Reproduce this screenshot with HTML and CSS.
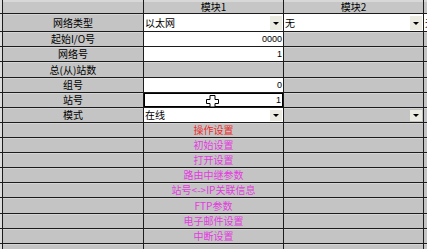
FILE: index.html
```html
<!DOCTYPE html>
<html>
<head>
<meta charset="utf-8">
<link rel="stylesheet" href="styles.css">
</head>
<body>
<div class="sheet">
  <div class="edge"></div><div class="cell hdr"></div><div class="cell hdr">模块1</div><div class="cell hdr">模块2</div><div class="cell hdr"></div>

  <div class="edge"></div><div class="cell label">网络类型</div>
  <div class="cell white combo"><span>以太网</span><i class="btn"><b></b></i></div>
  <div class="cell white combo"><span>无</span><i class="btn"><b></b></i></div>
  <div class="cell white clip">无</div>

  <div class="edge"></div><div class="cell label">起始I/O号</div><div class="cell white num">0000</div><div class="cell"></div><div class="cell"></div>
  <div class="edge"></div><div class="cell label">网络号</div><div class="cell white num">1</div><div class="cell"></div><div class="cell"></div>
  <div class="edge"></div><div class="cell label">总(从)站数</div><div class="cell"></div><div class="cell"></div><div class="cell"></div>
  <div class="edge"></div><div class="cell label">组号</div><div class="cell white num">0</div><div class="cell"></div><div class="cell"></div>
  <div class="edge"></div><div class="cell label">站号</div><div class="cell white num sel">1</div><div class="cell"></div><div class="cell"></div>

  <div class="edge"></div><div class="cell label">模式</div>
  <div class="cell white combo"><span>在线</span><i class="btn"><b></b></i></div>
  <div class="cell combo"><span></span><i class="btn"><b></b></i></div>
  <div class="cell"></div>

  <div class="edge"></div><div class="cell"></div><div class="cell act red">操作设置</div><div class="cell"></div><div class="cell"></div>
  <div class="edge"></div><div class="cell"></div><div class="cell act">初始设置</div><div class="cell"></div><div class="cell"></div>
  <div class="edge"></div><div class="cell"></div><div class="cell act">打开设置</div><div class="cell"></div><div class="cell"></div>
  <div class="edge"></div><div class="cell"></div><div class="cell act">路由中继参数</div><div class="cell"></div><div class="cell"></div>
  <div class="edge"></div><div class="cell"></div><div class="cell act">站号&lt;-&gt;IP关联信息</div><div class="cell"></div><div class="cell"></div>
  <div class="edge"></div><div class="cell"></div><div class="cell act">FTP参数</div><div class="cell"></div><div class="cell"></div>
  <div class="edge"></div><div class="cell"></div><div class="cell act">电子邮件设置</div><div class="cell"></div><div class="cell"></div>
  <div class="edge"></div><div class="cell"></div><div class="cell act">中断设置</div><div class="cell"></div><div class="cell"></div>
  <div class="edge"></div><div class="cell"></div><div class="cell"></div><div class="cell"></div><div class="cell"></div>
</div>
<svg class="cursor" width="15" height="14" viewBox="0 0 15 14">
  <path d="M5 1.5 h5 v4 h3.5 v4 h-3.5 v3.5 h-5 v-3.5 h-3.5 v-4 h3.5 z" fill="#fff" stroke="#000" stroke-width="1" stroke-linejoin="round"/>
</svg>
</body>
</html>
```

FILE: styles.css
```css
html, body {
  margin: 0;
  padding: 0;
  background: #c4c4c4;
  overflow: hidden;
}
body {
  position: relative;
  width: 427px;
  height: 249px;
  font-family: "Noto Sans CJK SC", "Noto Sans", sans-serif;
  font-size: 10px;
  color: #000;
}
.sheet {
  display: grid;
  grid-template-columns: 2px 140px 139px 139px 1fr;
  grid-template-rows: 13px 17px 14px 14px 15px 14px 14px 14px 14px 14px 14px 14px 14px 15px 14px 14px 20px;
  gap: 1px;
  background: #1c1c1c;
  width: 427px;
  height: 249px;
  overflow: hidden;
}
.edge {
  background: #dcdcdc;
}
.cell {
  background: #c4c4c4;
  box-shadow: inset 0 1px 0 #d4d4d4;
  display: flex;
  align-items: center;
  overflow: hidden;
  white-space: nowrap;
  line-height: 1;
}
.hdr {
  justify-content: center;
  background: #c6c6c6;
  box-shadow: inset 0 2px 0 #d8d8d8;
}
.label {
  justify-content: center;
}
.white {
  background: #fff;
  box-shadow: none;
}
.num {
  justify-content: flex-end;
  padding-right: 1px;
  font-family: "Liberation Sans", Arial, sans-serif;
  font-size: 9px;
}
.sel {
  box-shadow: inset 0 0 0 1px #000;
  padding-right: 2px;
}
.combo {
  justify-content: space-between;
  align-items: stretch;
}
.combo span {
  display: flex;
  align-items: center;
  padding-left: 1px;
}
.btn {
  width: 12px;
  margin: 2px 1px 1px 0;
  background: #ecebe2;
  display: flex;
  align-items: center;
  justify-content: center;
}
.btn b {
  width: 0;
  height: 0;
  border-left: 3px solid transparent;
  border-right: 3px solid transparent;
  border-top: 3px solid #000;
}
.clip {
  padding-left: 1px;
}
.act {
  justify-content: center;
  color: #e33ce0;
}
.act.red {
  color: #ec2c2c;
}
.cursor {
  position: absolute;
  left: 205px;
  top: 94px;
}
```
